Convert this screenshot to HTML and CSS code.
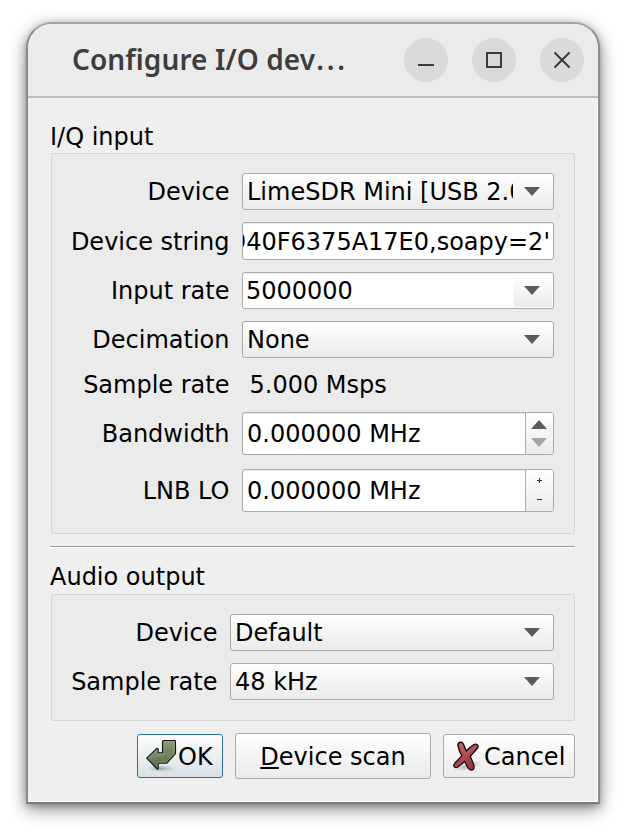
FILE: index.html
```html
<!DOCTYPE html>
<html lang="en">
<head>
<meta charset="utf-8">
<title>Configure I/O devices</title>
<link rel="stylesheet" href="styles.css">
</head>
<body>
<main class="window">
  <header class="titlebar">
    <h1 class="title">Configure I/O dev<span class="dots">...</span></h1>
    <div class="controls">
      <span class="ctl"><svg width="44" height="44"><path d="M14 27h16" class="stroke"/></svg></span>
      <span class="ctl"><svg width="44" height="44"><path d="M15 15h14v14h-14z" class="stroke"/></svg></span>
      <span class="ctl"><svg width="44" height="44"><path d="M14.5 14.5l15 15M29.500 14.500l-15 15" class="stroke"/></svg></span>
    </div>
  </header>
  <div class="content">
    <h2 class="heading first">I/Q input</h2>
    <section class="group input-group">
      <div class="label">Device</div>
      <div class="field combo"><span class="clip">LimeSDR Mini [USB 2.0]</span><svg class="arrow" width="16" height="9"><path d="M0 0h16l-8 9z"/></svg></div>
      <div class="label tall">Device string</div>
      <div class="field edit scrolled"><span>940F6375A17E0,soapy=2'</span></div>
      <div class="label">Input rate</div>
      <div class="field edit rate"><span>5000000</span><div class="drop"><svg class="arrow" width="16" height="9"><path d="M0 0h16l-8 9z"/></svg></div></div>
      <div class="label">Decimation</div>
      <div class="field combo"><span class="clip">None</span><svg class="arrow" width="16" height="9"><path d="M0 0h16l-8 9z"/></svg></div>
      <div class="label short">Sample rate</div>
      <div class="value">5.000 Msps</div>
      <div class="label spin-label">Bandwidth</div>
      <div class="field edit spin"><span>0.000000 MHz</span><div class="steps"><svg width="27" height="41"><path d="M5 16h16l-8-9z" fill="#5b5b5b"/><path d="M5 25h16l-8 9z" fill="#a5a5a5"/></svg></div></div>
      <div class="label spin-label">LNB LO</div>
      <div class="field edit spin"><span>0.000000 MHz</span><div class="steps"><svg width="27" height="41"><path d="M11 10.500h5M13.500 8v5M11 29.500h5" stroke="#333" fill="none"/></svg></div></div>
    </section>
    <hr class="rule">
    <h2 class="heading">Audio output</h2>
    <section class="group audio-group">
      <div class="label">Device</div>
      <div class="field combo"><span class="clip">Default</span><svg class="arrow" width="16" height="9"><path d="M0 0h16l-8 9z"/></svg></div>
      <div class="label">Sample rate</div>
      <div class="field combo"><span class="clip">48 kHz</span><svg class="arrow" width="16" height="9"><path d="M0 0h16l-8 9z"/></svg></div>
    </section>
    <footer class="buttons">
      <div class="button ok">
        <svg width="32" height="34" viewBox="0 0 32 34">
          <defs>
            <linearGradient id="green" x1="0" y1="0" x2="0" y2="1"><stop offset="0" stop-color="#8b9b78"/><stop offset="1" stop-color="#5b6b4b"/></linearGradient>
            <radialGradient id="shade"><stop offset="0" stop-color="#000" stop-opacity=".28"/><stop offset="1" stop-color="#000" stop-opacity="0"/></radialGradient>
          </defs>
          <ellipse cx="15" cy="29.500" rx="14" ry="3.500" fill="url(#shade)"/>
          <path d="M16.500 2.500q0-1 1-1h11q1 0 1 1v12.200l-8.800 9.600h-8.500v6l-1.200-.5L.7 19.200 11 9.200l1.200.7v3.800h4.300z" fill="url(#green)" stroke="#11150d" stroke-width="1.100" stroke-linejoin="round"/>
          <path d="M17.600 2.700h10.800v11.500l-8.200 9h-9v5M2.300 19.200l8.900-8.300v3.900h6.400z" fill="none" stroke="#b3c0a3" stroke-opacity=".4" stroke-width=".8"/>
        </svg>
        <span>OK</span>
      </div>
      <div class="button scan"><span><u>D</u>evice scan</span></div>
      <div class="button cancel">
        <svg width="30" height="32" viewBox="0 -1 30 32">
          <defs><linearGradient id="red" x1="0" y1="0" x2="1" y2="1"><stop offset="0" stop-color="#bd6265"/><stop offset=".55" stop-color="#a8474d"/><stop offset="1" stop-color="#85343a"/></linearGradient></defs>
          <ellipse cx="15" cy="25" rx="14" ry="4" fill="url(#shade)" transform="rotate(-15 15 25)"/>
          <path d="M4.800 4.200Q5 1.300 7.800 1.200Q10 1.300 10.800 4L13.300 9.800Q17.500 5.800 21 3.500Q23 2.600 24.500 4Q25.800 5.300 24.500 7L17.200 15.500Q19.600 20 21 25Q21.300 28.500 18.800 28.900Q16.500 29.400 15 26.800L11.800 20.500L4.900 26Q2.300 27.500 1 25.500Q.4 24 1.800 22.300L8.800 15Q5.800 9.800 4.800 4.200Z" fill="url(#red)" stroke="#160b0c" stroke-width="1.300"/>
          <path d="M7.200 3.500l5.700 10.300L22.500 5.200" fill="none" stroke="#d58b8d" stroke-opacity=".4"/>
        </svg>
        <span>Cancel</span>
      </div>
    </footer>
  </div>
</main>
</body>
</html>
```

FILE: styles.css
```css
* { box-sizing: border-box; }
body {
  margin: 0;
  padding: 22px 25px 31px 26px;
  height: 835px;
  overflow: hidden;
  background: #fff;
  color: #000;
  font: 24px/28px "DejaVu Sans", sans-serif;
}
svg { display: block; flex: none; }
.window {
  height: 782px;
  border: 2px solid #8b8b8b;
  border-top-color: #a3a3a3;
  border-bottom-color: #7b7b7b;
  border-radius: 26px 26px 0 0;
  background: #efefef;
  box-shadow: 0 5px 17px rgba(0, 0, 0, .46), 0 2px 6px rgba(0, 0, 0, .22);
  overflow: hidden;
}
.titlebar {
  height: 74px;
  display: flex;
  justify-content: space-between;
  padding: 14px 14px 0 44px;
  background: #ebebeb;
  border-bottom: 2px solid #bcbcbc;
}
.title {
  margin: 0;
  font: 600 28px/42px "Noto Sans", sans-serif;
  letter-spacing: .1px;
  color: #3d3d3d;
  white-space: nowrap;
}
.dots { letter-spacing: 2.800px; margin-left: 1px; }
.controls { display: flex; gap: 24px; }
.ctl { width: 44px; height: 44px; border-radius: 50%; background: #dadada; }
.stroke { fill: none; stroke: #3a3a3a; stroke-width: 2; }
.content {
  height: 704px;
  padding: 24px 22px 0;
  border-right: 1px solid #fff;
  border-bottom: 1px solid #fff;
}
.heading { margin: 0; height: 31px; font-size: 24px; font-weight: 400; line-height: 28px; }
.heading.first { line-height: 30px; }
.group {
  display: grid;
  column-gap: 12.500px;
  margin-left: 1px;
  padding: 19px 20px 0 18px;
  border: 1px solid #d6d6d6;
  border-radius: 2px;
  background: #ebebeb;
}
.input-group { height: 381px; grid-template-columns: 159.500px 312px; grid-template-rows: 49px 50px 49px 49px 42px 57px 43px; }
.audio-group { height: 127px; grid-template-columns: 147.500px 324px; grid-template-rows: 49px 37px; }
.label { height: 39px; line-height: 39px; text-align: right; white-space: nowrap; }
.label.tall { height: 40px; line-height: 40px; }
.label.short { height: 30px; line-height: 30px; }
.label.spin-label { height: 44px; line-height: 44px; }
.value { height: 30px; line-height: 30px; padding-left: 7.500px; }
.field {
  height: 37px;
  display: flex;
  align-items: center;
  border: 1px solid #aaa;
  border-radius: 3px;
  white-space: nowrap;
  overflow: hidden;
}
.combo { justify-content: space-between; padding: 0 13px 0 4px; background: linear-gradient(#fefefe, #ebebeb); }
.clip { width: 266px; overflow: hidden; }
.audio-group .clip { width: 278px; }
.arrow { fill: #5b5b5b; }
.edit { justify-content: space-between; padding-left: 4px; background: #fff; box-shadow: inset 0 1px #eee; }
.scrolled { height: 38px; justify-content: flex-end; padding: 2px 3px 0 0; }
.rate { padding-left: 3px; }
.drop {
  width: 38px;
  height: 33px;
  margin-right: 1px;
  padding-right: 2px;
  display: flex;
  align-items: center;
  justify-content: center;
  background: linear-gradient(#fefefe, #ebebeb);
}
.spin { height: 43px; }
.steps { width: 28px; height: 41px; border-left: 1px solid #aaa; background: linear-gradient(#fefefe, #ebebeb); }
.rule { height: 2px; margin: 12px 0 15px; border: 0; border-top: 1px solid #999; background: #fff; }
.buttons { display: flex; justify-content: flex-end; align-items: center; gap: 12px; margin-top: 12px; }
.button {
  display: flex;
  align-items: center;
  height: 44px;
  border: 1px solid #aaa;
  border-radius: 3px;
  background: linear-gradient(#fefefe, #ebebeb);
  white-space: nowrap;
}
.button span { padding-top: 2px; }
.ok { width: 86px; padding-left: 8px; border-color: #2d6f9b; background: linear-gradient(#fbfcfd, #d9e1e6); }
.scan { width: 196px; height: 46px; justify-content: center; }
.scan u { text-underline-offset: 2px; text-decoration-thickness: 2px; text-decoration-skip-ink: none; }
.cancel { width: 132px; padding-left: 9px; }
.cancel span { margin-left: 1px; }
```
